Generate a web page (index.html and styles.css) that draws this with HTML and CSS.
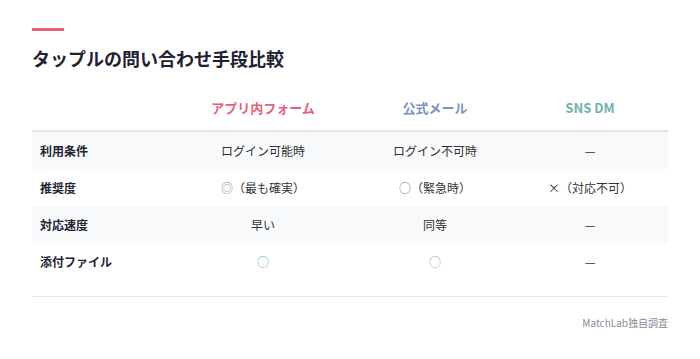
FILE: index.html
```html
<!DOCTYPE html>
<html lang="ja">
<head>
<meta charset="utf-8">
<link rel="stylesheet" href="styles.css">
</head>
<body>
<div class="page">
  <div class="accent"></div>
  <h1 class="title">タップルの問い合わせ手段比較</h1>
  <div class="table-wrap">
    <table class="cmp">
      <colgroup>
        <col class="c-label"><col class="c-app"><col class="c-mail"><col class="c-sns">
      </colgroup>
      <thead>
        <tr>
          <th></th>
          <th class="h-app">アプリ内フォーム</th>
          <th class="h-mail">公式メール</th>
          <th class="h-sns">SNS DM</th>
        </tr>
      </thead>
      <tbody>
        <tr class="alt">
          <td class="label">利用条件</td>
          <td>ログイン可能時</td>
          <td>ログイン不可時</td>
          <td>—</td>
        </tr>
        <tr>
          <td class="label">推奨度</td>
          <td><span class="sym-dbl">◎</span>（最も確実）</td>
          <td><span class="sym-gray">○</span>（緊急時）</td>
          <td>×（対応不可）</td>
        </tr>
        <tr class="alt">
          <td class="label">対応速度</td>
          <td>早い</td>
          <td>同等</td>
          <td>—</td>
        </tr>
        <tr>
          <td class="label">添付ファイル</td>
          <td><span class="sym-teal">○</span></td>
          <td><span class="sym-green">○</span></td>
          <td>—</td>
        </tr>
      </tbody>
    </table>
  </div>
  <p class="source">MatchLab独自調査</p>
</div>
</body>
</html>
```
FILE: styles.css
```css
* { box-sizing: border-box; }
html, body {
  margin: 0;
  padding: 0;
  background: #ffffff;
}
body {
  font-family: "Noto Sans CJK JP", "Noto Sans", sans-serif;
  color: #333333;
}
.page {
  padding: 28px 32px 0 32px;
}
.accent {
  width: 32px;
  height: 3px;
  background: #e8607a;
}
.title {
  margin: 13px 0 0 0;
  font-size: 18px;
  line-height: 28px;
  font-weight: 700;
  color: #1f2233;
}
.table-wrap {
  margin-top: 14px;
  padding-bottom: 16px;
  border-bottom: 1px solid #e5e6ea;
}
.cmp {
  width: 100%;
  border-collapse: collapse;
  table-layout: fixed;
}
.c-label { width: 136px; }
.c-app { width: 190px; }
.c-mail { width: 154px; }
.c-sns { width: 156px; }
.cmp th {
  font-size: 13px;
  line-height: 20px;
  font-weight: 700;
  padding: 12px 8px;
  text-align: center;
  border-bottom: 2px solid #e3e4ea;
}
.h-app { color: #e8607a; }
.h-mail { color: #7b93c4; }
.h-sns { color: #6fb3ad; }
.cmp td {
  font-size: 12px;
  line-height: 19px;
  padding: 9px 8px;
  text-align: center;
  color: #333333;
}
.cmp td.label {
  text-align: left;
  font-weight: 700;
  color: #222533;
}
.cmp tr.alt td {
  background: #f8f9fb;
}
.sym-dbl { color: #8a94b0; }
.sym-gray { color: #7d7d85; }
.sym-teal { color: #4fbfb0; }
.sym-green { color: #8cb89a; }
.source {
  margin: 18px 0 0 0;
  text-align: right;
  font-size: 10px;
  line-height: 16px;
  color: #878c98;
}
```
